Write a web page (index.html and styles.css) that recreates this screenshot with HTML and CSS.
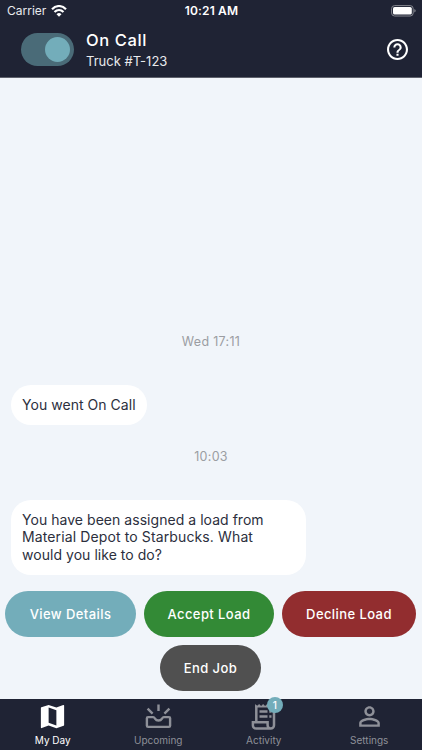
FILE: index.html
```html
<!DOCTYPE html>
<html lang="en">
<head>
<meta charset="utf-8">
<title>On Call</title>
<link rel="stylesheet" href="styles.css">
</head>
<body>
<div class="app">
  <header class="header">
    <div class="status">
      <div class="carrier"><span class="carrier-name">Carrier</span>
        <svg class="wifi" viewBox="0 0 16 12"><path d="M1 4.300C5-.1 11-.1 15 4.300M3.500 7.100c2.700-2.800 6.300-2.800 9 0" fill="none" stroke="#fff" stroke-width="2.100"/><path d="M5.500 9.200q2.500-2.200 5 0L8 11.800z" fill="#fff"/></svg>
      </div>
      <span class="clock">10:21 AM</span>
      <svg class="battery" viewBox="0 0 25 12"><rect x=".6" y=".6" width="21.600" height="10.400" rx="3" fill="none" stroke="#85878f"/><rect x="2" y="2" width="18.800" height="7.600" rx="1.600" fill="#fff"/><path d="M23.300 4v3.600q1.400-.5 1.400-1.800T23.300 4z" fill="#85878f"/></svg>
    </div>
    <div class="bar">
      <div class="toggle"><div class="knob"></div></div>
      <div class="titles"><div class="title">On Call</div><div class="truck">Truck #T-123</div></div>
      <svg class="help" viewBox="2 2 20 20"><path fill="#fff" d="M11 18h2v-2h-2v2zm1-16C6.480 2 2 6.480 2 12s4.480 10 10 10 10-4.480 10-10S17.520 2 12 2zm0 18c-4.410 0-8-3.590-8-8s3.590-8 8-8 8 3.590 8 8-3.590 8-8 8zm0-14c-2.210 0-4 1.790-4 4h2c0-1.100.9-2 2-2s2 .9 2 2c0 2-3 1.750-3 5h2c0-2.250 3-2.500 3-5 0-2.210-1.790-4-4-4z"/></svg>
    </div>
  </header>
  <main class="chat">
    <div class="stamp">Wed 17:11</div>
    <div class="bubble bubble-short">You went On Call</div>
    <div class="stamp stamp-second">10:03</div>
    <div class="bubble bubble-long"><span class="line">You have been assigned a load from</span><br><span class="line line-wide">Material Depot to Starbucks. What</span><br><span class="line">would you like to do?</span></div>
    <div class="actions">
      <div class="button view"><span>View Details</span></div>
      <div class="button accept"><span>Accept Load</span></div>
      <div class="button decline"><span>Decline Load</span></div>
      <div class="button end"><span>End Job</span></div>
    </div>
  </main>
  <nav class="tabs">
    <div class="tab active">
      <svg class="icon" viewBox="0 0 24 24"><path fill="currentColor" d="M20.500 3l-.16.03L15 5.100 9 3 3.360 4.900c-.21.07-.36.25-.36.48V20.500c0 .28.22.5.5.5l.16-.03L9 18.900l6 2.100 5.640-1.900c.21-.07.36-.25.36-.48V3.500c0-.28-.22-.5-.5-.5zM15 19l-6-2.110V5l6 2.110V19z"/></svg>
      <span>My Day</span>
    </div>
    <div class="tab">
      <svg class="icon" viewBox="0 0 31 31" fill="none" stroke="currentColor" stroke-width="2.400"><path d="M15.500 3.600v6.500M4.600 7.600l5 5M26.400 7.600l-5 5"/><path d="M5 16.100h5.200c1.100 0 1.300.7 1.800 1.500 1.600 2.600 5.400 2.600 7 0 .5-.8.7-1.500 1.800-1.500H26q1.100 0 1.100 1.100v7.500q0 1.200-1.200 1.200H5.100q-1.200 0-1.200-1.200v-7.500q0-1.100 1.100-1.100z"/></svg>
      <span>Upcoming</span>
    </div>
    <div class="tab">
      <div class="icon-wrap">
        <svg class="icon" viewBox="0 0 31 31" fill="none" stroke="currentColor" stroke-width="2.500"><path d="M8.300 21V4.500M26 5v19.300a3.200 3.200 0 0 1-6.400 0v-3H4.900v3a3.100 3.100 0 0 0 3.200 3.200h15"/><path d="M7.100 3l2 2 2-2 2 2 2-2 2 2 2-2 2 2 2-2 2 2 2-2v3.600H7.100z" fill="currentColor" stroke="none"/><path d="M11.500 10.500h8M11.500 15.500h8M21.300 10.500h2.200M21.300 15.500h2.200"/></svg>
        <span class="badge">1</span>
      </div>
      <span>Activity</span>
    </div>
    <div class="tab">
      <svg class="icon" viewBox="0 0 24 24"><path fill="currentColor" d="M12 5.900c1.160 0 2.100.94 2.100 2.100s-.94 2.100-2.100 2.100S9.900 9.160 9.900 8s.94-2.100 2.100-2.100m0 9c2.970 0 6.100 1.460 6.100 2.100v1.100H5.900V17c0-.64 3.130-2.100 6.100-2.100M12 4C9.790 4 8 5.790 8 8s1.790 4 4 4 4-1.790 4-4-1.790-4-4-4zm0 9c-2.670 0-8 1.340-8 4v3h16v-3c0-2.660-5.330-4-8-4z"/></svg>
      <span>Settings</span>
    </div>
  </nav>
</div>
</body>
</html>
```
FILE: styles.css
```css
* { box-sizing: border-box; }
body { margin: 0; font-family: Inter, "Liberation Sans", sans-serif; }
.app { width: 422px; height: 750px; display: flex; flex-direction: column; overflow: hidden; background: #f1f5fa; }
.header { height: 78px; flex: none; background: #1f2334; color: #fff; border-bottom: 1px solid #5e616c; }
.status { height: 22px; display: grid; grid-template-columns: 1fr auto 1fr; align-items: center; padding: 0 6px 0 7px; }
.carrier { display: flex; align-items: center; gap: 5px; font-size: 12px; line-height: 22px; color: #e9eaed; }
.wifi { width: 16px; height: 12px; }
.clock { font-size: 12px; font-weight: 600; line-height: 22px; letter-spacing: .15px; }
.battery { width: 25px; height: 12px; justify-self: end; }
.bar { height: 55px; display: flex; align-items: center; padding: 0 14px 0 21px; }
.toggle { width: 53px; height: 33px; border-radius: 17px; background: #4a6b78; padding: 4px; display: flex; justify-content: flex-end; }
.knob { width: 25px; height: 25px; border-radius: 50%; background: #73adba; }
.titles { flex: 1; margin-left: 12px; padding-top: 1px; white-space: nowrap; }
.title { font-size: 16.500px; font-weight: 500; line-height: 22px; letter-spacing: .6px; }
.truck { font-size: 13px; line-height: 21px; letter-spacing: 0; color: #e9eaed; }
.help { width: 21px; height: 21px; }
.chat { flex: 1; display: flex; flex-direction: column; align-items: flex-start; padding-top: 254px; }
.stamp { width: 100%; height: 20px; line-height: 20px; text-align: center; font-size: 12.500px; letter-spacing: .3px; color: #9b9da2; }
.stamp-second { margin-top: 22px; }
.bubble { background: #fff; color: #2c2f3d; margin-left: 10.500px; font-size: 14px; white-space: nowrap; letter-spacing: .04px; }
.bubble-short { margin-top: 33px; width: 136.500px; height: 40px; border-radius: 20px; padding-left: 11.500px; line-height: 40px; }
.bubble-long { margin-top: 33px; width: 295px; height: 74.500px; border-radius: 20px; padding: 11px 11.500px; line-height: 17.300px; }
.line-wide { letter-spacing: .12px; }
.actions { width: 100%; margin-top: 16px; padding: 0 6px 0 5px; display: flex; flex-wrap: wrap; justify-content: center; gap: 8px; }
.button { height: 46px; border-radius: 23px; color: #fff; display: flex; align-items: center; justify-content: center; font-size: 13px; font-weight: 500; letter-spacing: .42px; white-space: nowrap; }
.view { width: 131px; background: #73adba; }
.accept { width: 130px; background: #338a36; }
.decline { width: 134px; background: #922d2f; }
.end { width: 101px; background: #505050; }
.tabs { height: 51.500px; flex: none; background: #1f2334; display: grid; grid-template-columns: repeat(4, 1fr); }
.tab { display: flex; flex-direction: column; align-items: center; padding-top: 2px; color: #8e9098; font-size: 10px; line-height: 16px; letter-spacing: 0; }
.active { color: #fff; }
.icon { display: block; width: 31px; height: 31px; }
.icon-wrap { position: relative; }
.badge { position: absolute; left: 18.500px; top: -3.500px; width: 16px; height: 16px; border-radius: 50%; background: #73adba; color: #fff; font-size: 10px; font-weight: 500; text-align: center; line-height: 16px; }
```
